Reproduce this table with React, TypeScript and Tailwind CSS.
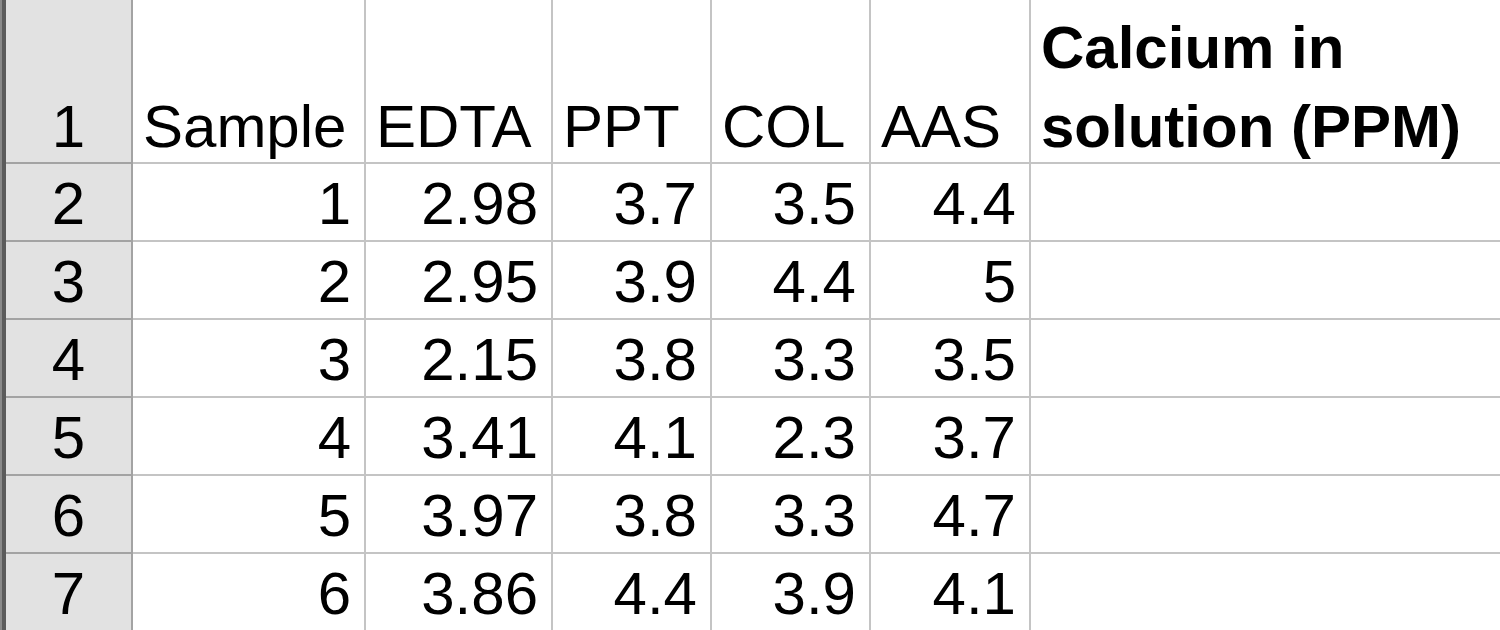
const columns = ["Sample", "EDTA", "PPT", "COL", "AAS"];

const rows = [
  ["1", "2.98", "3.7", "3.5", "4.4"],
  ["2", "2.95", "3.9", "4.4", "5"],
  ["3", "2.15", "3.8", "3.3", "3.5"],
  ["4", "3.41", "4.1", "2.3", "3.7"],
  ["5", "3.97", "3.8", "3.3", "4.7"],
  ["6", "3.86", "4.4", "3.9", "4.1"],
];

function RowHead({ n, tall }: { n: number; tall?: boolean }) {
  return (
    <div
      className={`relative flex items-end justify-center border-r-2 border-b-2 border-[#a3a3a3] bg-[#e2e2e2] pl-[6px] ${
        tall ? "h-[164px] pb-[1px]" : "h-[78px] pb-[2px]"
      }`}
    >
      <div className="absolute left-0 top-0 bottom-[-2px] w-[6px] bg-[#8a8a8a]">
        <div className="ml-[2px] h-full w-[4px] bg-[#5c5c5c]" />
      </div>
      <span>{n}</span>
    </div>
  );
}

export default function App() {
  return (
    <div
      className="h-[630px] w-[1500px] overflow-hidden bg-white text-[60px] leading-[69px] text-black"
      style={{ fontFamily: '"Liberation Sans", Arial, sans-serif' }}
    >
      <div className="grid grid-cols-[133px_233px_187px_159px_159px_160px_1fr]">
        <RowHead n={1} tall />
        {columns.map((c) => (
          <div
            key={c}
            className="flex h-[164px] items-end border-r-2 border-b-2 border-[#c4c4c4] pb-[1px] pl-[10px]"
          >
            {c}
          </div>
        ))}
        <div className="flex h-[164px] items-end border-b-2 border-[#c4c4c4] pl-[10px]">
          <span className="mb-[-4px] block font-bold leading-[79px]">
            Calcium in
            <br />
            solution (PPM)
          </span>
        </div>

        {rows.map((r, i) => (
          <div key={i} className="contents">
            <RowHead n={i + 2} />
            {r.map((v, j) => (
              <div
                key={j}
                className="flex h-[78px] items-end justify-end border-r-2 border-b-2 border-[#c4c4c4] pb-[2px] pr-[13px]"
              >
                {v}
              </div>
            ))}
            <div className="h-[78px] border-b-2 border-[#c4c4c4]" />
          </div>
        ))}
      </div>
    </div>
  );
}
